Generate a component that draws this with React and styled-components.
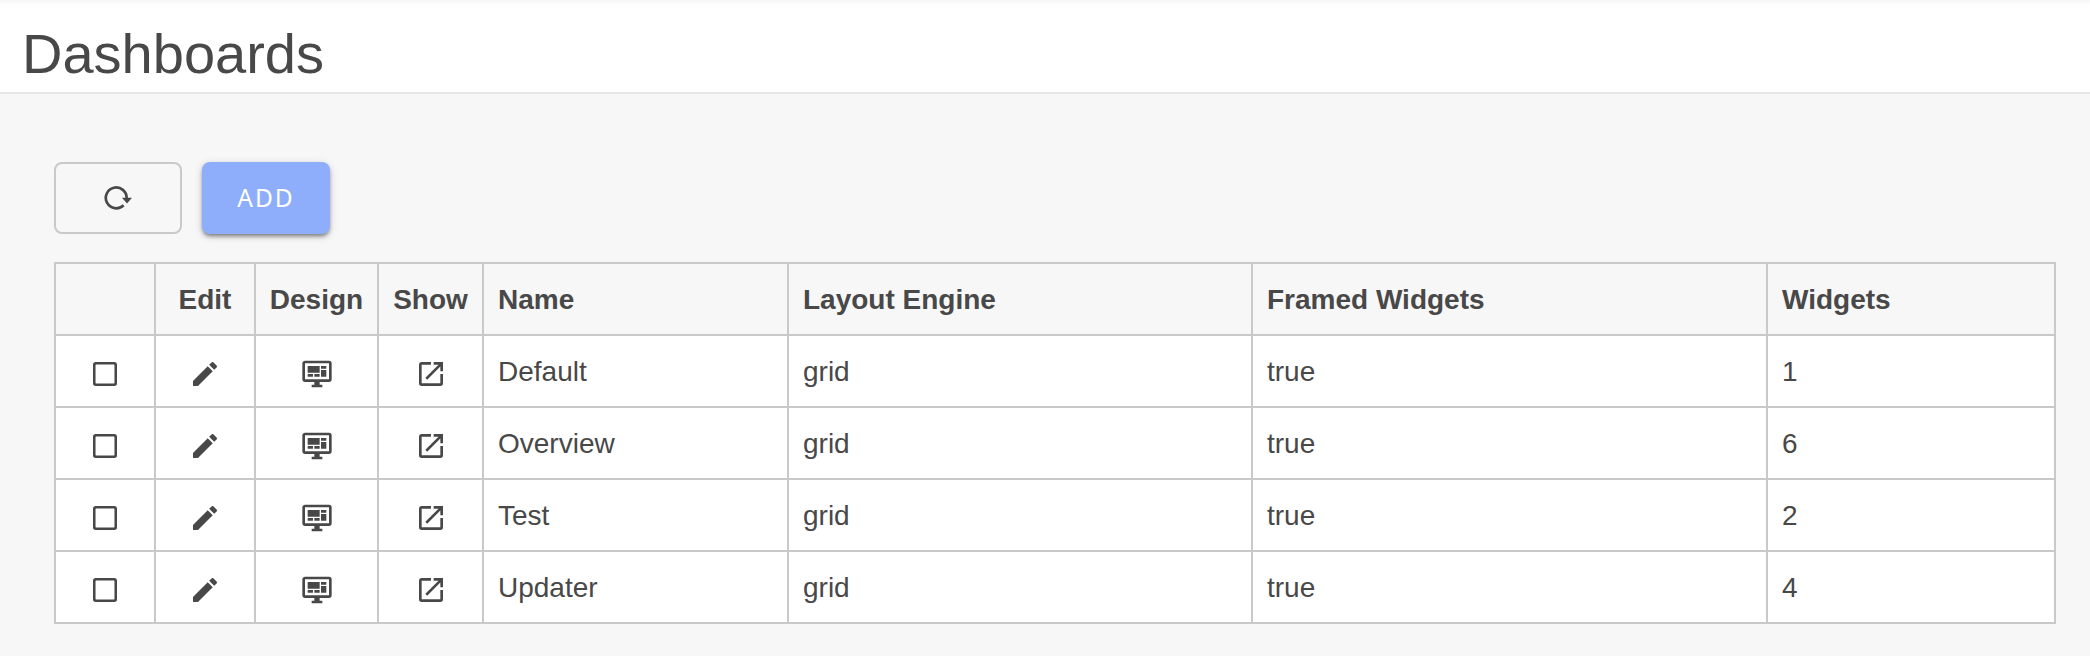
import styled, { createGlobalStyle } from "styled-components";
import { useState } from "react";

const icons = {
  checkbox:
    "M19,3H5C3.89,3 3,3.89 3,5V19A2,2 0 0,0 5,21H19A2,2 0 0,0 21,19V5C21,3.89 20.1,3 19,3M18.6,4.9Q19.1,4.9 19.1,5.4V18.6Q19.1,19.1 18.6,19.1H5.4Q4.9,19.1 4.9,18.6V5.4Q4.9,4.9 5.4,4.9Z",
  checked:
    "M19,3H5A2,2 0 0,0 3,5V19A2,2 0 0,0 5,21H19A2,2 0 0,0 21,19V5A2,2 0 0,0 19,3M19,5V19H5V5H19M10,17L6,13L7.41,11.58L10,14.17L16.59,7.58L18,9",
  edit: "M20.71,7.04C21.1,6.65 21.1,6 20.71,5.63L18.37,3.29C18,2.9 17.35,2.9 16.96,3.29L15.12,5.12L18.87,8.87M3,17.25V21H6.75L17.81,9.93L14.06,6.18L3,17.25Z",
  design:
    "M21,16V4H3V16H21M21,2A2,2 0 0,1 23,4V16A2,2 0 0,1 21,18H14V20H16V22H8V20H10V18H3C1.89,18 1,17.1 1,16V4C1,2.89 1.89,2 3,2H21M5,6H14V11H5V6M15,6H19V8H15V6M19,9V14H15V9H19M5,12H9V14H5V12M10,12H14V14H10V12Z",
  show: "M14,3V5H17.59L7.76,14.83L9.17,16.24L19,6.41V10H21V3M19,19H5V5H12V3H5C3.89,3 3,3.9 3,5V19A2,2 0 0,0 5,21H19A2,2 0 0,0 21,19V12H19V19Z",
};

const dashboards = [
  { name: "Default", layout: "grid", framed: true, widgets: 1 },
  { name: "Overview", layout: "grid", framed: true, widgets: 6 },
  { name: "Test", layout: "grid", framed: true, widgets: 2 },
  { name: "Updater", layout: "grid", framed: true, widgets: 4 },
];

const columns = [100, 100, 123, 105, 305, 464, 515, 288];

function Icon({ name }) {
  return (
    <IconSvg viewBox="0 0 24 24">
      <path d={icons[name]} fillRule="evenodd" />
    </IconSvg>
  );
}

export default function App() {
  const [selected, setSelected] = useState([]);

  function toggle(name) {
    if (selected.includes(name)) {
      setSelected(selected.filter((item) => item !== name));
    } else {
      setSelected([...selected, name]);
    }
  }

  return (
    <Page>
      <GlobalStyle />
      <Header>
        <Title>Dashboards</Title>
      </Header>
      <Content>
        <Toolbar>
          <RefreshButton type="button" aria-label="Refresh">
            <RefreshSvg viewBox="0 0 28 24">
              <path d="M19.6 19.2A10.4 10.4 0 1 1 22.6 12.4" />
              <polygon points="18,11.8 28,11.8 23,17.4" />
            </RefreshSvg>
          </RefreshButton>
          <AddButton type="button">ADD</AddButton>
        </Toolbar>
        <Table>
          <colgroup>
            {columns.map((width, i) => (
              <Column key={i} $width={width} />
            ))}
          </colgroup>
          <thead>
            <tr>
              <HeadCell />
              <HeadCell $center>Edit</HeadCell>
              <HeadCell $center>Design</HeadCell>
              <HeadCell $center>Show</HeadCell>
              <HeadCell>Name</HeadCell>
              <HeadCell>Layout Engine</HeadCell>
              <HeadCell>Framed Widgets</HeadCell>
              <HeadCell>Widgets</HeadCell>
            </tr>
          </thead>
          <tbody>
            {dashboards.map((item) => (
              <tr key={item.name}>
                <Cell $center>
                  <IconButton
                    type="button"
                    aria-label="Select"
                    onClick={() => toggle(item.name)}
                  >
                    <Icon
                      name={selected.includes(item.name) ? "checked" : "checkbox"}
                    />
                  </IconButton>
                </Cell>
                <Cell $center>
                  <IconButton type="button" aria-label="Edit">
                    <Icon name="edit" />
                  </IconButton>
                </Cell>
                <Cell $center>
                  <IconButton type="button" aria-label="Design">
                    <Icon name="design" />
                  </IconButton>
                </Cell>
                <Cell $center>
                  <IconButton type="button" aria-label="Show">
                    <Icon name="show" />
                  </IconButton>
                </Cell>
                <Cell>{item.name}</Cell>
                <Cell>{item.layout}</Cell>
                <Cell>{String(item.framed)}</Cell>
                <Cell>{item.widgets}</Cell>
              </tr>
            ))}
          </tbody>
        </Table>
      </Content>
    </Page>
  );
}

//----- Styled Components

const GlobalStyle = createGlobalStyle`
  * {
    box-sizing: border-box;
  }
  body {
    margin: 0;
    background-color: #f7f7f7;
  }
`;

const Page = styled.div`
  min-height: 100vh;
  background-color: #f7f7f7;
  color: #484848;
  font-family: "Liberation Sans", Helvetica, Arial, sans-serif;
  font-size: 28px;
`;

const Header = styled.header`
  height: 94px;
  padding: 22px 22px 0;
  background: linear-gradient(#f7f7f7, #ffffff 6px);
  border-bottom: 2px solid #e6e6e6;
`;

const Title = styled.h1`
  margin: 0;
  font-size: 56px;
  font-weight: normal;
  line-height: 64px;
`;

const Content = styled.main`
  padding: 68px 34px 32px 54px;
`;

const Toolbar = styled.div`
  display: flex;
  gap: 20px;
  margin-bottom: 28px;
`;

const Button = styled.button`
  display: flex;
  align-items: center;
  justify-content: center;
  width: 128px;
  height: 72px;
  padding: 0;
  border-radius: 8px;
  cursor: pointer;
`;

const RefreshButton = styled(Button)`
  border: 2px solid #c9c9c9;
  background-color: transparent;
  color: #484848;
`;

const AddButton = styled(Button)`
  padding-bottom: 2px;
  border: none;
  background-color: #8eaefb;
  color: #ffffff;
  font-family: "Noto Sans", sans-serif;
  font-size: 24.5px;
  letter-spacing: 2px;
  box-shadow: 0 3px 4px -1px rgba(0, 0, 0, 0.45), 0 2px 8px rgba(0, 0, 0, 0.16);
`;

const RefreshSvg = styled.svg`
  width: 28px;
  height: 24px;
  path {
    fill: none;
    stroke: currentColor;
    stroke-width: 2.7;
  }
  polygon {
    fill: currentColor;
  }
`;

const Table = styled.table`
  width: 2002px;
  table-layout: fixed;
  border-collapse: separate;
  border-spacing: 0;
  border-top: 2px solid #c9c9c9;
  border-left: 2px solid #c9c9c9;
`;

const Column = styled.col`
  width: ${(props) => props.$width}px;
`;

const Cell = styled.td`
  height: 72px;
  padding: 2px ${(props) => (props.$center ? 0 : "14px")} 0;
  border-right: 2px solid #c9c9c9;
  border-bottom: 2px solid #c9c9c9;
  background-color: #ffffff;
  line-height: 32px;
  text-align: ${(props) => (props.$center ? "center" : "left")};
  vertical-align: middle;
`;

const HeadCell = styled(Cell).attrs({ as: "th" })`
  background-color: #f7f7f7;
  font-weight: bold;
`;

const IconButton = styled.button`
  display: block;
  margin: 4px auto 0;
  padding: 0;
  border: none;
  background: none;
  color: #484848;
  cursor: pointer;
`;

const IconSvg = styled.svg`
  display: block;
  width: 32px;
  height: 32px;
  fill: currentColor;
`;
